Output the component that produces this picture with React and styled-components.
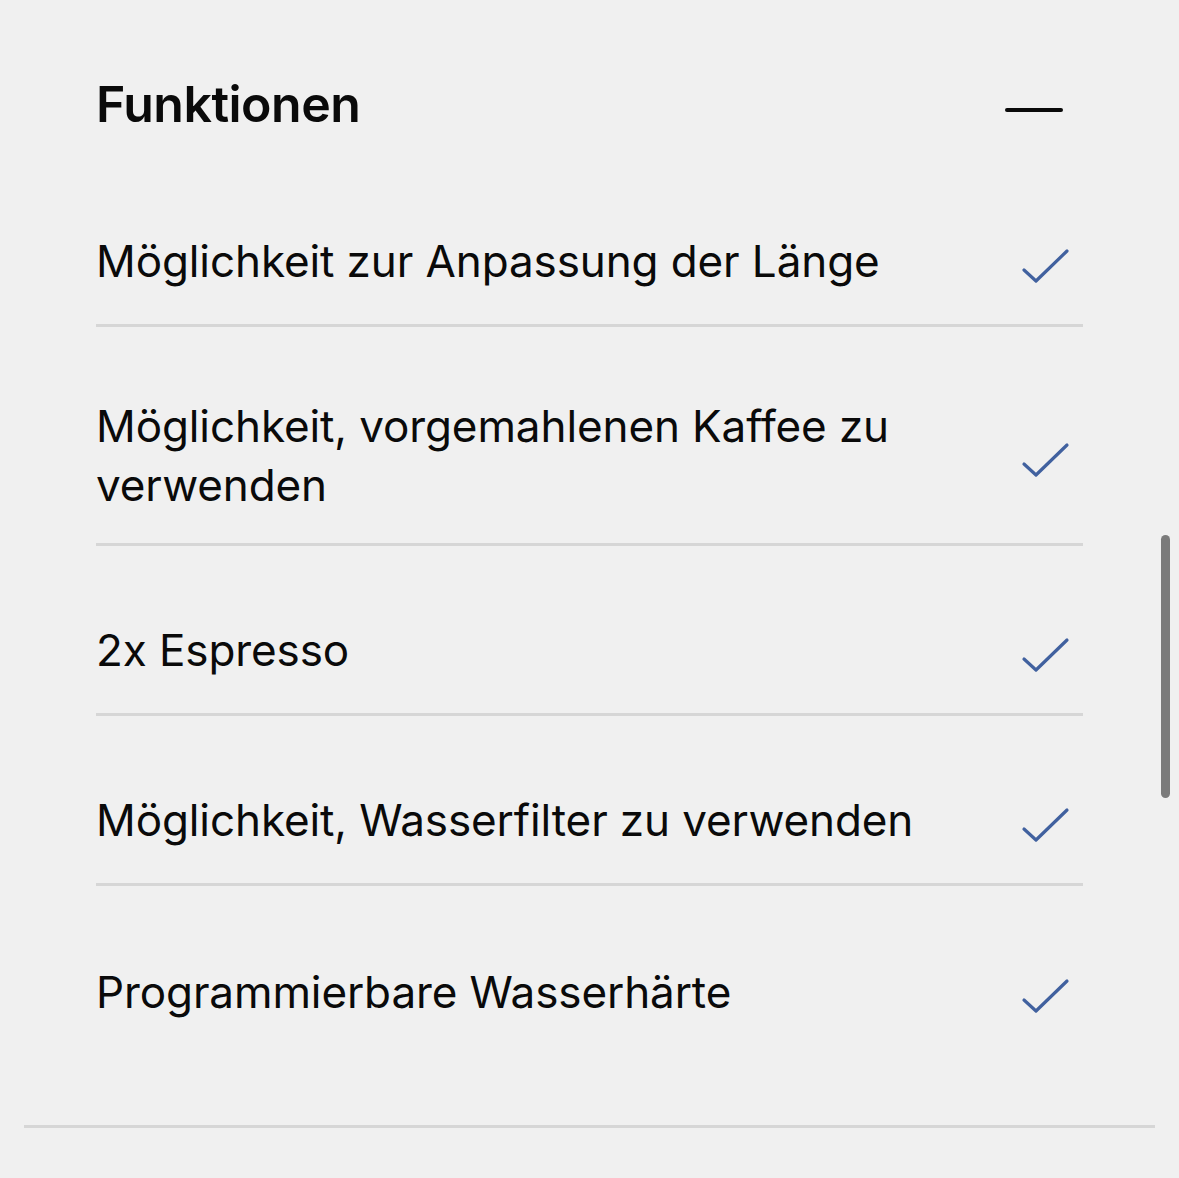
import styled, { createGlobalStyle } from "styled-components";

const features = [
  "Möglichkeit zur Anpassung der Länge",
  "Möglichkeit, vorgemahlenen Kaffee zu verwenden",
  "2x Espresso",
  "Möglichkeit, Wasserfilter zu verwenden",
  "Programmierbare Wasserhärte",
];

const GlobalStyle = createGlobalStyle`
  html, body {
    margin: 0;
    padding: 0;
    background: #f0f0f0;
  }
  body {
    font-family: Inter, "Noto Sans", "Liberation Sans", sans-serif;
    color: #0a0a0a;
    -webkit-font-smoothing: antialiased;
  }
`;

const Page = styled.main`
  position: relative;
  min-height: 1178px;
  padding: 0 24px;
  box-sizing: border-box;
  overflow: hidden;
`;

const Section = styled.section`
  border-bottom: 3px solid #d6d6d6;
  padding: 0 72px 69px 72px;
`;

const Header = styled.div`
  display: flex;
  align-items: flex-start;
  justify-content: space-between;
  height: 157px;
  padding-top: 74px;
  box-sizing: border-box;
`;

const Title = styled.h2`
  margin: 0;
  font-size: 50px;
  line-height: 60px;
  font-weight: 600;
  letter-spacing: -0.5px;
`;

const Minus = styled.span`
  display: block;
  width: 58px;
  height: 4px;
  border-radius: 2px;
  background: #0a0a0a;
  margin-right: 20px;
  margin-top: 34px;
`;

const List = styled.ul`
  list-style: none;
  margin: 0;
  padding: 0;
`;

const Row = styled.li`
  display: flex;
  align-items: center;
  justify-content: space-between;
  gap: 40px;
  min-height: 170px;
  box-sizing: border-box;
  padding: 70px 0 28px;
  border-bottom: ${({ $last }) => ($last ? "none" : "3px solid #d6d6d6")};
`;

const Label = styled.span`
  font-size: 44px;
  line-height: 59px;
  font-weight: 400;
  max-width: 830px;
  letter-spacing: -0.1px;
`;

const CheckWrap = styled.span`
  display: flex;
  margin-right: 12px;
  margin-top: 10px;
`;

const Scrollbar = styled.div`
  position: absolute;
  top: 535px;
  right: 9px;
  width: 9px;
  height: 263px;
  border-radius: 5px;
  background: #7b7b7b;
`;

function Check() {
  return (
    <CheckWrap>
      <svg width="50" height="38" viewBox="0 0 50 38" fill="none">
        <path
          d="M3 22 L15 33 L46 3"
          stroke="#41619f"
          strokeWidth="3.2"
          strokeLinecap="round"
          strokeLinejoin="round"
        />
      </svg>
    </CheckWrap>
  );
}

export default function App() {
  return (
    <Page>
      <GlobalStyle />
      <Section>
        <Header>
          <Title>Funktionen</Title>
          <Minus />
        </Header>
        <List>
          {features.map((f, i) => (
            <Row key={f} $last={i === features.length - 1}>
              <Label>{f}</Label>
              <Check />
            </Row>
          ))}
        </List>
      </Section>
      <Scrollbar />
    </Page>
  );
}
